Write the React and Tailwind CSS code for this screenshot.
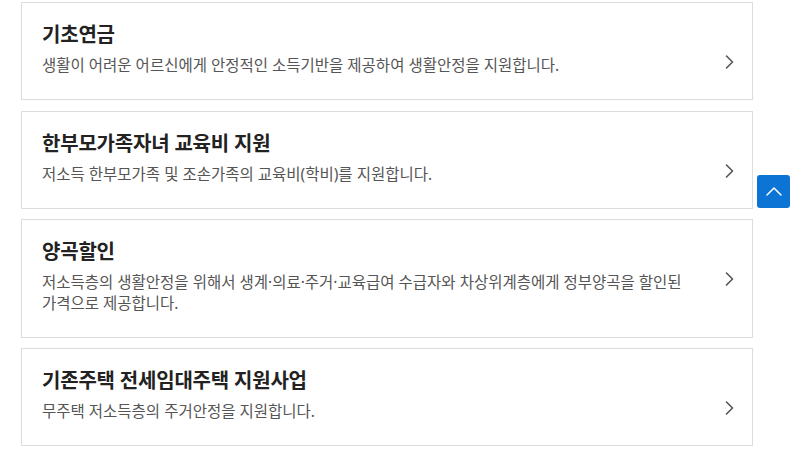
import React from 'react';

const items = [
  {
    title: '기초연금',
    desc: '생활이 어려운 어르신에게 안정적인 소득기반을 제공하여 생활안정을 지원합니다.',
  },
  {
    title: '한부모가족자녀 교육비 지원',
    desc: '저소득 한부모가족 및 조손가족의 교육비(학비)를 지원합니다.',
  },
  {
    title: '양곡할인',
    desc: '저소득층의 생활안정을 위해서 생계·의료·주거·교육급여 수급자와 차상위계층에게 정부양곡을 할인된 가격으로 제공합니다.',
  },
  {
    title: '기존주택 전세임대주택 지원사업',
    desc: '무주택 저소득층의 주거안정을 지원합니다.',
  },
];

function Chevron() {
  return (
    <svg width="24" height="22" viewBox="0 0 24 22" fill="none" className="shrink-0 -mt-[4px]">
      <path d="M8.5 5 L14.5 11 L8.5 17" stroke="#555" strokeWidth="1.6" strokeLinecap="round" strokeLinejoin="round" />
    </svg>
  );
}

export default function App() {
  return (
    <div
      className="relative w-[808px] h-[450px] bg-white overflow-hidden"
      style={{ fontFamily: '"Noto Sans", "Noto Sans CJK KR", sans-serif' }}
    >
      {/* Benefit list */}
      <div className="flex flex-col gap-[10.5px] pt-[2px] pl-[21px] w-[753px]">
        {items.map((item) => (
          <a
            key={item.title}
            className="block border border-[#dcdcdc] bg-white pl-5 pr-[10px] pt-[18px] pb-[23.5px]"
          >
            <h3 className="text-[20px] leading-[28px] font-bold text-[#222] tracking-[-0.2px]">
              {item.title}
            </h3>
            <div className="flex items-start mt-[6px]">
              <p className="flex-1 break-keep text-[15.5px] leading-[20.5px] text-[#555]">{item.desc}</p>
              <Chevron />
            </div>
          </a>
        ))}
      </div>

      {/* Scroll to top */}
      <button className="absolute left-[757px] top-[175px] w-[33px] h-[33px] rounded-[3px] bg-[#0b74d5] flex items-center justify-center">
        <svg width="16" height="9" viewBox="0 0 16 9" fill="none">
          <path d="M1 8 L8 1 L15 8" stroke="#fff" strokeWidth="1.5" strokeLinecap="round" strokeLinejoin="round" />
        </svg>
      </button>
    </div>
  );
}
